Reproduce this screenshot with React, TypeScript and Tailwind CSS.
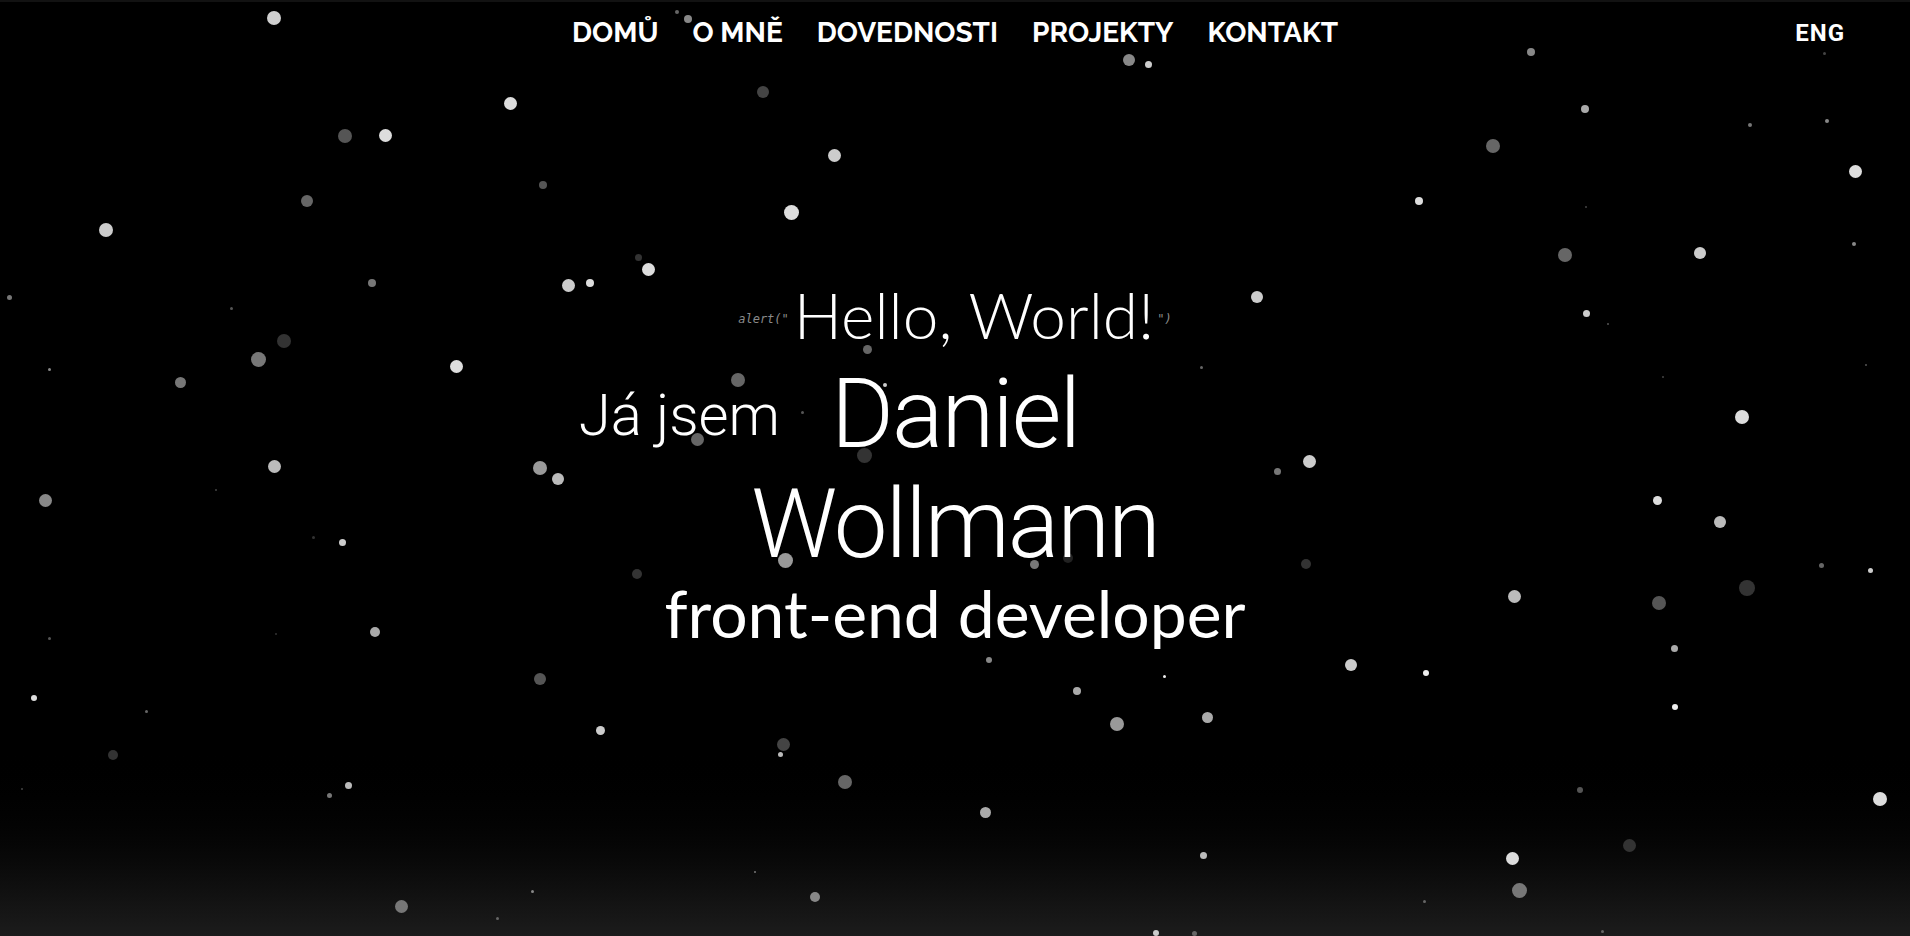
import React from 'react';

// [x, y, průměr, barva] – středy teček na plátně
const particles: [number, number, number, string][] = [
  [274, 16, 14, '#d0d0d0'], [688, 17, 8, '#888'], [677, 10, 4, '#666'], [510, 101, 13, '#ddd'],
  [385, 133, 13, '#ddd'], [345, 134, 14, '#555'], [763, 90, 12, '#444'], [834, 153, 13, '#ccc'],
  [1129, 58, 12, '#888'], [1148, 62, 7, '#ccc'], [1531, 50, 8, '#888'], [1585, 107, 8, '#aaa'],
  [1750, 123, 4, '#777'], [1827, 119, 4, '#888'], [1855, 169, 13, '#ddd'], [1493, 144, 14, '#666'],
  [1419, 199, 8, '#ddd'], [1565, 253, 14, '#666'], [1700, 251, 12, '#ccc'], [1854, 242, 4, '#888'],
  [1586, 205, 2, '#444'], [1586, 311, 7, '#ccc'], [1608, 322, 2, '#555'], [1866, 363, 2, '#555'],
  [1742, 415, 14, '#ddd'], [1663, 375, 2, '#444'], [1657, 498, 9, '#ddd'], [1720, 520, 12, '#bbb'],
  [1821, 563, 5, '#666'], [1870, 568, 5, '#ccc'], [1747, 586, 16, '#333'], [1659, 601, 14, '#555'],
  [1514, 594, 13, '#bbb'], [1674, 646, 7, '#aaa'], [1675, 705, 6, '#eee'], [1426, 671, 6, '#eee'],
  [1351, 663, 12, '#ccc'], [1309, 459, 13, '#ccc'], [1277, 469, 7, '#777'], [1257, 295, 12, '#ccc'],
  [1201, 365, 3, '#666'], [1306, 562, 10, '#333'], [1207, 715, 11, '#aaa'], [1117, 722, 14, '#999'],
  [1077, 689, 8, '#aaa'], [1164, 674, 3, '#eee'], [989, 658, 6, '#888'], [791, 210, 15, '#ddd'],
  [648, 267, 13, '#ddd'], [638, 255, 7, '#333'], [543, 183, 8, '#555'], [568, 283, 13, '#ccc'],
  [590, 281, 8, '#ddd'], [307, 199, 12, '#666'], [106, 228, 14, '#ccc'], [9, 295, 5, '#777'],
  [231, 306, 3, '#555'], [372, 281, 8, '#777'], [284, 339, 14, '#333'], [258, 357, 15, '#777'],
  [180, 380, 11, '#777'], [49, 367, 3, '#888'], [456, 364, 13, '#ddd'], [738, 378, 14, '#666'],
  [885, 383, 4, '#ccc'], [697, 437, 13, '#666'], [864, 453, 15, '#333'], [802, 410, 3, '#555'],
  [540, 466, 14, '#999'], [558, 477, 12, '#bbb'], [785, 558, 15, '#999'], [637, 572, 10, '#333'],
  [1034, 562, 9, '#777'], [1068, 556, 10, '#222'], [274, 464, 13, '#bbb'], [45, 498, 13, '#888'],
  [216, 488, 2, '#444'], [313, 535, 3, '#333'], [342, 540, 7, '#ccc'], [375, 630, 10, '#aaa'],
  [49, 636, 3, '#555'], [276, 632, 2, '#333'], [34, 696, 6, '#ddd'], [146, 709, 3, '#666'],
  [113, 753, 10, '#333'], [540, 677, 12, '#555'], [600, 728, 9, '#ccc'], [783, 742, 13, '#444'],
  [780, 752, 5, '#bbb'], [845, 780, 14, '#666'], [985, 810, 11, '#aaa'], [348, 783, 7, '#bbb'],
  [329, 793, 5, '#777'], [22, 787, 2, '#444'], [401, 904, 13, '#777'], [532, 889, 3, '#888'],
  [497, 916, 3, '#666'], [755, 870, 2, '#777'], [815, 895, 10, '#888'], [1203, 853, 7, '#bbb'],
  [1156, 931, 6, '#ccc'], [1194, 931, 5, '#666'], [1424, 899, 3, '#666'], [1512, 856, 13, '#ddd'],
  [1519, 888, 15, '#777'], [1580, 788, 6, '#555'], [1629, 843, 13, '#333'], [1880, 797, 14, '#ddd'],
  [1602, 929, 3, '#666'], [867, 347, 9, '#666'], [1824, 51, 3, '#444'],
];

const navItems = ['DOMŮ', 'O MNĚ', 'DOVEDNOSTI', 'PROJEKTY', 'KONTAKT'];

const App: React.FC = () => {
  return (
    <div className="relative h-[936px] w-full overflow-hidden border-t-2 border-[#121212] bg-linear-to-b from-black from-[79%] to-[#1c1c1c] text-white">
      {/* tečky v pozadí */}
      <div className="absolute inset-0">
        {particles.map(([x, y, d, c], i) => (
          <span
            key={i}
            className="absolute rounded-full"
            style={{ left: x - d / 2, top: y - d / 2, width: d, height: d, background: c }}
          />
        ))}
      </div>

      <div className="relative flex flex-col">
        {/* Navigace */}
        <nav className="grid grid-cols-[1fr_auto_1fr] items-center pt-[17px]">
          <div />
          <ul className="flex items-center gap-[34px] font-['Raleway','Lato',sans-serif] text-[28px] font-bold leading-none">
            {navItems.map((item) => (
              <li key={item} className="cursor-pointer">{item}</li>
            ))}
          </ul>
          <div className="self-start justify-self-end pr-[65px]">
            <span className="block pt-[2px] font-['Roboto',sans-serif] text-[24px] font-bold leading-none tracking-[1px]">ENG</span>
          </div>
        </nav>

        {/* Hero */}
        <main className="mt-[236px] flex flex-col items-center">
          <div className="flex items-center">
            <span className="mr-[5px] mt-[8px] font-['DejaVu_Sans_Mono',monospace] text-[12px] italic text-[#8a8a8a]">alert("</span>
            <span className="font-['Lato',sans-serif] text-[64px] font-light leading-none">Hello, World!</span>
            <span className="ml-[3px] mt-[8px] font-['DejaVu_Sans_Mono',monospace] text-[12px] italic text-[#8a8a8a]">")</span>
          </div>

          <div className="mt-[19px] grid w-full grid-cols-[1fr_auto_1fr] items-end font-['Roboto',sans-serif] font-light">
            <span className="mb-[18px] mr-[51px] justify-self-end text-[58px] leading-none">Já jsem</span>
            <span className="text-[96px] leading-none tracking-[-2px]">Daniel</span>
            <div />
          </div>
          <span className="mt-[14px] font-['Roboto',sans-serif] text-[96px] font-light leading-none tracking-[-2px]">Wollmann</span>

          <span className="mt-[8px] font-['Lato',sans-serif] text-[66px] font-normal leading-none">front-end developer</span>
        </main>
      </div>
    </div>
  );
};

export default App;
